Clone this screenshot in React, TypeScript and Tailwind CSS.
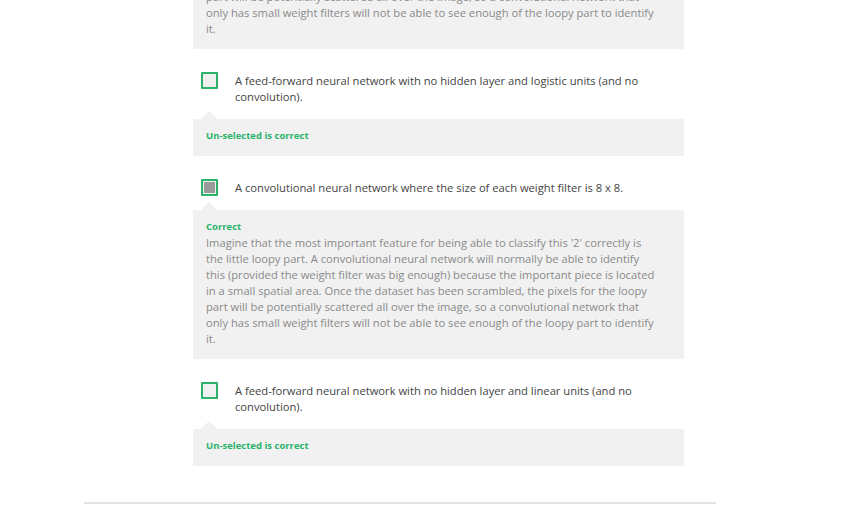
const explanation = [
  "Imagine that the most important feature for being able to classify this '2' correctly is",
  'the little loopy part. A convolutional neural network will normally be able to identify',
  'this (provided the weight filter was big enough) because the important piece is located',
  'in a small spatial area. Once the dataset has been scrambled, the pixels for the loopy',
  'part will be potentially scattered all over the image, so a convolutional network that',
  'only has small weight filters will not be able to see enough of the loopy part to identify',
  'it.',
];

type Option = {
  text: string;
  checked: boolean;
  label: string;
  body?: string[];
};

const options: Option[] = [
  {
    text: 'A feed-forward neural network with no hidden layer and logistic units (and no convolution).',
    checked: false,
    label: 'Un-selected is correct',
  },
  {
    text: 'A convolutional neural network where the size of each weight filter is 8 x 8.',
    checked: true,
    label: 'Correct',
    body: explanation,
  },
  {
    text: 'A feed-forward neural network with no hidden layer and linear units (and no convolution).',
    checked: false,
    label: 'Un-selected is correct',
  },
];

function Feedback({ label, body, arrow = true }: { label: string; body?: string[]; arrow?: boolean }) {
  return (
    <div className="relative bg-[#f1f1f1] pl-[13px] pr-[10px] pt-[9px] pb-[12px]">
      {arrow && (
        <div className="absolute left-[8px] top-[-8px] h-0 w-0 border-x-[8px] border-b-[8px] border-x-transparent border-b-[#f1f1f1]" />
      )}
      <div className="text-[9.5px] font-bold leading-[16px] text-[#2bb36b]">{label}</div>
      {body && (
        <p className="whitespace-nowrap text-[11.2px] leading-[16px] text-[#8a8a8a]">
          {body.map((line) => (
            <span key={line} className="block">
              {line}
            </span>
          ))}
        </p>
      )}
    </div>
  );
}

function Checkbox({ checked }: { checked: boolean }) {
  return (
    <div className="mt-[-1px] flex h-[17px] w-[17px] shrink-0 items-center justify-center rounded-[1px] border-2 border-[#2bb36b] bg-[#f0f0f0]">
      {checked && <div className="h-[11px] w-[11px] bg-[#9a9a9a]" />}
    </div>
  );
}

export default function App() {
  return (
    <div className="min-h-[515px] overflow-hidden bg-white font-['Open_Sans',sans-serif]">
      <div className="ml-[84px] w-[632px]">
        <div className="ml-[109px] mt-[-100px] w-[491px]">
          <Feedback label="Correct" body={explanation} arrow={false} />
          {options.map((o) => (
            <div key={o.text} className="mt-[24px]">
              <div className="flex gap-[17px] pl-[8px] pr-[40px]">
                <Checkbox checked={o.checked} />
                <p className="text-[11.2px] leading-[16px] text-[#444]">{o.text}</p>
              </div>
              <div className="mt-[14px]">
                <Feedback label={o.label} body={o.body} />
              </div>
            </div>
          ))}
        </div>
        <div className="mt-[36px] h-[2px] bg-[#e4e4e4]" />
      </div>
    </div>
  );
}
